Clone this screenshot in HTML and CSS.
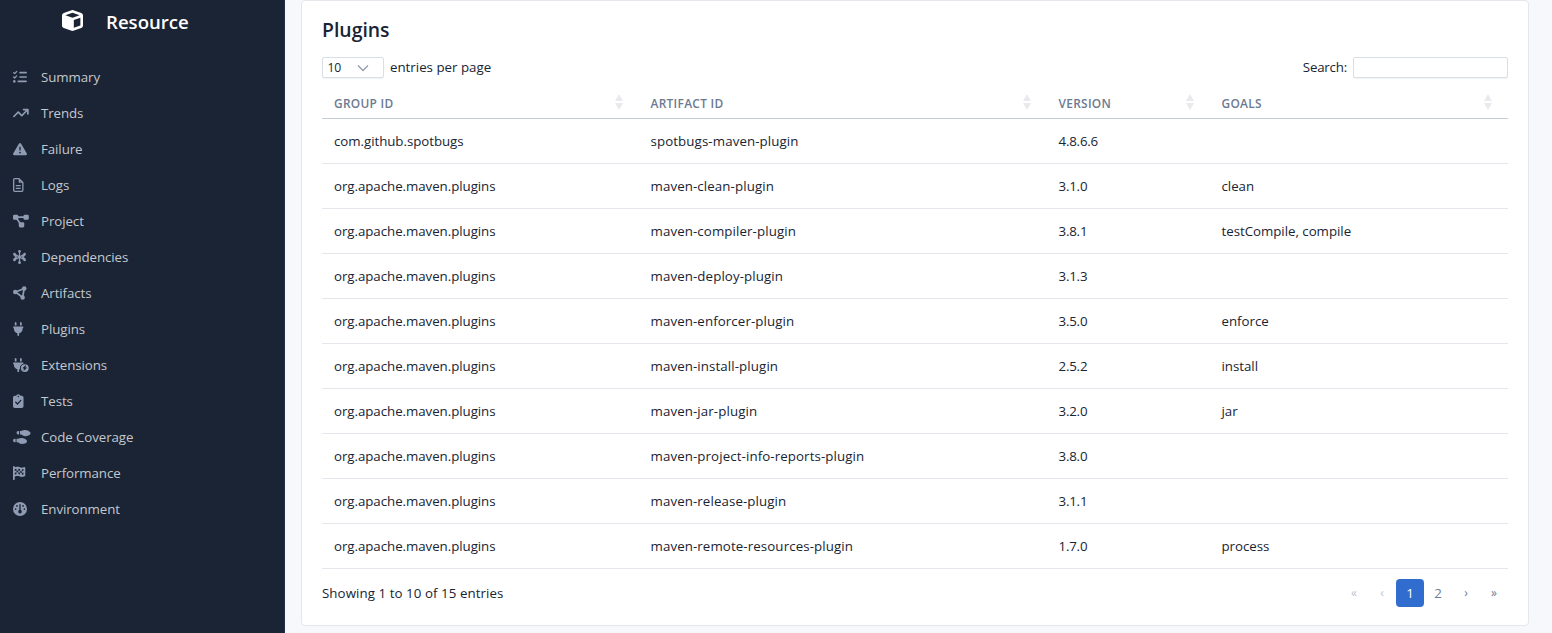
FILE: index.html
```html
<!DOCTYPE html>
<html lang="en">
<head>
<meta charset="utf-8">
<title>Resource - Plugins</title>
<link rel="stylesheet" href="styles.css">
</head>
<body>
<aside class="sidebar">
  <div class="brand">
    <svg class="brand-icon" viewBox="0 0 512 512"><path d="M234.5 5.7c13.9-5 29.1-5 43.1 0l192 68.6C495 83.4 512 107.5 512 134.6l0 242.9c0 27-17 51.2-42.5 60.3l-192 68.6c-13.9 5-29.1 5-43.1 0l-192-68.6C17 428.6 0 404.5 0 377.4L0 134.6c0-27 17-51.2 42.5-60.3l192-68.6zM256 66L82.3 128 256 190l173.7-62L256 66zm32 368.6l160-57.1 0-188L288 246.6l0 188z"/></svg>
    <span>Resource</span>
  </div>
  <nav class="menu">
    <a class="item"><span class="icon"><svg viewBox="0 0 512 512"><g class="line" stroke-width="46"><path d="M24 96l38 38 72-80M24 256l38 38 72-80"/></g><g class="line" stroke-width="60"><path d="M256 96h224M256 256h224M192 416h288"/></g><circle cx="48" cy="416" r="46"/></svg></span><span>Summary</span></a>
    <a class="item"><span class="icon"><svg viewBox="0 0 576 512"><path d="M384 160c-17.700 0-32-14.300-32-32s14.300-32 32-32l160 0c17.700 0 32 14.300 32 32l0 160c0 17.700-14.300 32-32 32s-32-14.300-32-32l0-82.700L342.600 374.600c-12.500 12.500-32.800 12.500-45.300 0L192 269.300 54.600 406.600c-12.500 12.500-32.800 12.500-45.300 0s-12.500-32.800 0-45.300l160-160c12.500-12.500 32.800-12.500 45.300 0L320 306.700 466.700 160 384 160z"/></svg></span><span>Trends</span></a>
    <a class="item"><span class="icon"><svg viewBox="0 0 512 512"><path d="M256 32c14.200 0 27.300 7.500 34.500 19.800l216 368c7.300 12.400 7.300 27.700 .2 40.100S486.300 480 472 480L40 480c-14.300 0-27.600-7.700-34.700-20.100s-7-27.800 .2-40.100l216-368C228.700 39.500 241.800 32 256 32zm0 128c-13.300 0-24 10.700-24 24l0 112c0 13.300 10.700 24 24 24s24-10.700 24-24l0-112c0-13.300-10.700-24-24-24zm32 224a32 32 0 1 0 -64 0 32 32 0 1 0 64 0z"/></svg></span><span>Failure</span></a>
    <a class="item"><span class="icon"><svg viewBox="0 0 384 512"><g class="line" stroke-width="48"><path d="M64 24h156l140 140v284a40 40 0 0 1-40 40H64a40 40 0 0 1-40-40V64a40 40 0 0 1 40-40zM232 32v120h120M120 280h144M120 376h144"/></g></svg></span><span>Logs</span></a>
    <a class="item"><span class="icon"><svg viewBox="0 0 576 512"><rect y="24" width="192" height="184" rx="48"/><rect x="384" y="24" width="192" height="184" rx="48"/><rect x="212" y="300" width="200" height="190" rx="48"/><path class="line" stroke-width="64" d="M160 112h256M130 150l135 210"/></svg></span><span>Project</span></a>
    <a class="item"><span class="icon"><svg viewBox="0 0 476 512"><path class="line" stroke-width="48" d="M238 50v412M52 150l372 212M424 150L52 362M52 150v40l70 66-70 66v40M424 150v40l-70 66 70 66v40"/><circle cx="238" cy="50" r="50"/><circle cx="238" cy="462" r="50"/><circle cx="52" cy="150" r="48"/><circle cx="424" cy="150" r="48"/><circle cx="52" cy="362" r="48"/><circle cx="424" cy="362" r="48"/></svg></span><span>Dependencies</span></a>
    <a class="item"><span class="icon"><svg viewBox="0 0 512 512"><path class="line" stroke-width="64" d="M410 90L90 220l262 196z"/><circle cx="410" cy="88" r="82"/><circle cx="82" cy="218" r="82"/><circle cx="352" cy="420" r="82"/></svg></span><span>Artifacts</span></a>
    <a class="item"><span class="icon"><svg viewBox="0 0 384 512"><path d="M96 0C78.300 0 64 14.300 64 32l0 96 64 0 0-96c0-17.700-14.300-32-32-32zM288 0c-17.700 0-32 14.300-32 32l0 96 64 0 0-96c0-17.700-14.300-32-32-32zM32 160c-17.700 0-32 14.300-32 32s14.300 32 32 32l0 32c0 77.400 55 142 128 156.800l0 67.200c0 17.700 14.300 32 32 32s32-14.300 32-32l0-67.200C297 398 352 333.400 352 256l0-32c17.700 0 32-14.300 32-32s-14.300-32-32-32L32 160z"/></svg></span><span>Plugins</span></a>
    <a class="item"><span class="icon"><svg viewBox="0 0 576 512"><path d="M64 128V32a32 32 0 0 1 64 0v96zM256 128V32a32 32 0 0 1 64 0v96zM32 160h320a32 32 0 0 1 28 48C308 228 256 290 256 368c0 12 1 24 4 35-12 5-24 8-36 10v67a32 32 0 0 1-64 0v-67C87 398 32 333 32 256v-32a32 32 0 0 1 0-64z"/><path fill-rule="evenodd" d="M432 224a144 144 0 1 1 0 288 144 144 0 1 1 0-288zm24 48l-98 88c-10 9-4 24 10 24h37l-20 60c-5 15 8 22 20 12l98-88c10-9 4-24-10-24h-37l20-60c5-15-8-22-20-12z"/></svg></span><span>Extensions</span></a>
    <a class="item"><span class="icon"><svg viewBox="0 0 384 512"><path fill-rule="evenodd" d="M64 64h48a84 84 0 0 1 160 0h48a64 64 0 0 1 64 64v320a64 64 0 0 1-64 64H64a64 64 0 0 1-64-64V128a64 64 0 0 1 64-64zM192 64a28 28 0 1 0 0 56 28 28 0 1 0 0-56z"/><path class="cut" stroke-width="48" d="M100 300l64 64 122-130"/></svg></span><span>Tests</span></a>
    <a class="item"><span class="icon"><svg viewBox="0 0 640 512"><path d="M416 0c-60 0-88 32-128 32h-32v128h32c52 0 84 64 172 64 100 0 180-32 180-102C640 48 530 0 416 0zM192 32h32v128h-32a64 64 0 0 1 0-128z"/><path d="M288 288c-60 0-88 32-128 32h-32v128h32c52 0 84 64 172 64 100 0 180-32 180-102 0-74-110-122-224-122zM64 320h32v128H64a64 64 0 0 1 0-128z"/></svg></span><span>Code Coverage</span></a>
    <a class="item"><span class="icon"><svg viewBox="0 0 448 512"><path d="M32 0a32 32 0 0 1 32 32v16l69-17c38-10 78-5 113 12 46 23 101 23 147 0l10-5c20-10 45 5 45 27v280c0 13-8 25-21 30l-34 13c-46 17-97 15-141-7-37-19-80-23-120-13l-68 17v95a32 32 0 0 1-64 0V32A32 32 0 0 1 32 0z"/><path class="hole" d="M64 112l64-14v66l-64 16zM192 96l64 18v66l-64-18zM320 126l64-14v66l-64 14zM128 164l64-4v68l-64 4zM256 180l64 10v66l-64-10zM64 246l64-14v66l-64 16zM192 228l64 18v66l-64-18zM320 256l64-14v66l-64 14z"/></svg></span><span>Performance</span></a>
    <a class="item"><span class="icon"><svg viewBox="0 0 512 512"><circle cx="256" cy="256" r="256"/><circle class="hole" cx="256" cy="352" r="66"/><path class="cut" stroke-width="48" d="M256 96v220"/><g class="hole"><circle cx="144" cy="144" r="32"/><circle cx="96" cy="256" r="32"/><circle cx="368" cy="144" r="32"/><circle cx="416" cy="256" r="32"/></g></svg></span><span>Environment</span></a>
  </nav>
</aside>
<main class="content">
  <section class="card">
    <h1>Plugins</h1>
    <div class="tools">
      <div class="length"><div class="select"><span>10</span><svg viewBox="0 0 12 8"><path d="M1 1.500l5 5 5-5"/></svg></div><span class="label">entries per page</span></div>
      <label class="search"><span class="label">Search:</span><input type="text"></label>
    </div>
    <table>
      <colgroup><col class="c-group"><col class="c-artifact"><col class="c-version"><col class="c-goals"></colgroup>
      <thead><tr>
        <th><div><span>Group ID</span><i class="sort"></i></div></th>
        <th><div><span>Artifact ID</span><i class="sort"></i></div></th>
        <th><div><span>Version</span><i class="sort"></i></div></th>
        <th><div><span>Goals</span><i class="sort"></i></div></th>
      </tr></thead>
      <tbody>
        <tr><td>com.github.spotbugs</td><td>spotbugs-maven-plugin</td><td>4.8.6.6</td><td></td></tr>
        <tr><td>org.apache.maven.plugins</td><td>maven-clean-plugin</td><td>3.1.0</td><td>clean</td></tr>
        <tr><td>org.apache.maven.plugins</td><td>maven-compiler-plugin</td><td>3.8.1</td><td>testCompile, compile</td></tr>
        <tr><td>org.apache.maven.plugins</td><td>maven-deploy-plugin</td><td>3.1.3</td><td></td></tr>
        <tr><td>org.apache.maven.plugins</td><td>maven-enforcer-plugin</td><td>3.5.0</td><td>enforce</td></tr>
        <tr><td>org.apache.maven.plugins</td><td>maven-install-plugin</td><td>2.5.2</td><td>install</td></tr>
        <tr><td>org.apache.maven.plugins</td><td>maven-jar-plugin</td><td>3.2.0</td><td>jar</td></tr>
        <tr><td>org.apache.maven.plugins</td><td>maven-project-info-reports-plugin</td><td>3.8.0</td><td></td></tr>
        <tr><td>org.apache.maven.plugins</td><td>maven-release-plugin</td><td>3.1.1</td><td></td></tr>
        <tr><td>org.apache.maven.plugins</td><td>maven-remote-resources-plugin</td><td>1.7.0</td><td>process</td></tr>
      </tbody>
    </table>
    <footer class="foot">
      <span class="info">Showing 1 to 10 of 15 entries</span>
      <div class="pages"><span class="off">«</span><span class="off">‹</span><span class="current">1</span><span class="num">2</span><span>›</span><span>»</span></div>
    </footer>
  </section>
</main>
</body>
</html>
```
FILE: styles.css
```css
* { box-sizing: border-box; }
body {
  margin: 0;
  height: 633px;
  display: flex;
  overflow: hidden;
  background: #f6f8fb;
  color: #182433;
  font: 13.3px/20px "Open Sans", "Noto Sans", sans-serif;
}
.sidebar {
  width: 285px;
  flex: none;
  background: #1b2434;
  border-right: 1px solid #243049;
  color: #c3c8ce;
}
.brand {
  height: 59px;
  padding: 10px 0 0 61.5px;
  display: flex;
  align-items: flex-start;
  gap: 23.5px;
  color: #fff;
  font-size: 18.6px;
  font-weight: 600;
  line-height: 24px;
}
.brand-icon { width: 21px; height: 21px; fill: #fff; }
.item {
  height: 36px;
  padding-left: 13px;
  display: flex;
  align-items: center;
  letter-spacing: -0.08px;
}
.icon { width: 28px; height: 14px; display: flex; }
.icon svg { height: 14px; fill: #8f9bb3; overflow: visible; }
.icon .line { fill: none; stroke: #8f9bb3; stroke-linecap: round; stroke-linejoin: round; }
.icon .cut { fill: none; stroke: #1b2434; stroke-linecap: round; stroke-linejoin: round; }
.icon .hole { fill: #1b2434; }
.content { flex: 1; padding: 0 23px 0 16px; }
.card {
  height: 626px;
  padding: 17px 20px 0;
  background: #fff;
  border: 1px solid #e4e7eb;
  border-radius: 4px;
}
h1 { margin: 0; font-size: 19.4px; line-height: 24px; font-weight: 600; letter-spacing: 0; }
.tools { margin-top: 14px; height: 23px; display: flex; justify-content: space-between; align-items: center; }
.label { padding-bottom: 2px; }
.search .label { letter-spacing: -0.2px; }
.length, .search { display: flex; align-items: center; gap: 6px; }
.select {
  width: 62px;
  height: 21px;
  padding: 0 14px 0 4.5px;
  display: flex;
  align-items: center;
  justify-content: space-between;
  border: 1px solid #dadfe5;
  border-radius: 2px;
  box-shadow: 0 1px 1px rgba(24, 36, 51, .06);
  font-size: 12.2px;
  letter-spacing: -0.3px;
}
.select svg { width: 12px; height: 8px; fill: none; stroke: #929dab; stroke-width: 1.3; }
.search input {
  width: 155px;
  height: 21px;
  border: 1px solid #dadfe5;
  border-radius: 2px;
  box-shadow: 0 1px 1px rgba(24, 36, 51, .06);
  background: #fff;
}
table { width: 1186px; margin-top: 7px; border-collapse: separate; border-spacing: 0; table-layout: fixed; }
.c-group { width: 316.5px; }
.c-artifact { width: 408px; }
.c-version { width: 163px; }
th { height: 33px; padding: 0 16px 0 12px; border-bottom: 1px solid #c8ccd3; }
th div { display: flex; align-items: center; justify-content: space-between; }
th span { padding-top: 2px; color: #6c7a91; font-size: 11.9px; font-weight: 600; letter-spacing: .3px; text-transform: uppercase; }
.sort { display: grid; gap: 2px; }
.sort::before, .sort::after { content: ""; border: 4px solid transparent; }
.sort::before { border-top: 0; border-bottom: 7px solid #e8eaed; }
.sort::after { border-bottom: 0; border-top: 7px solid #e8eaed; }
td { height: 45px; padding: 0 12px; border-bottom: 1px solid #e4e7eb; }
td:nth-child(1) { letter-spacing: -0.05px; }
td:nth-child(2) { letter-spacing: .1px; }
td:nth-child(3) { letter-spacing: -0.2px; }
td:nth-child(4) { letter-spacing: -0.03px; }
.foot { height: 48px; display: flex; justify-content: space-between; align-items: center; }
.info { padding-bottom: 1px; letter-spacing: .07px; }
.pages { display: flex; color: #6c7a91; }
.pages span { width: 28px; height: 28px; line-height: 28px; text-align: center; font-size: 12px; }
.pages .off { color: #bcc4d0; }
.pages .current { color: #fff; background: #316ccf; border-radius: 4px; font-size: 13.3px; }
.pages .num { font-size: 13.3px; }
```
